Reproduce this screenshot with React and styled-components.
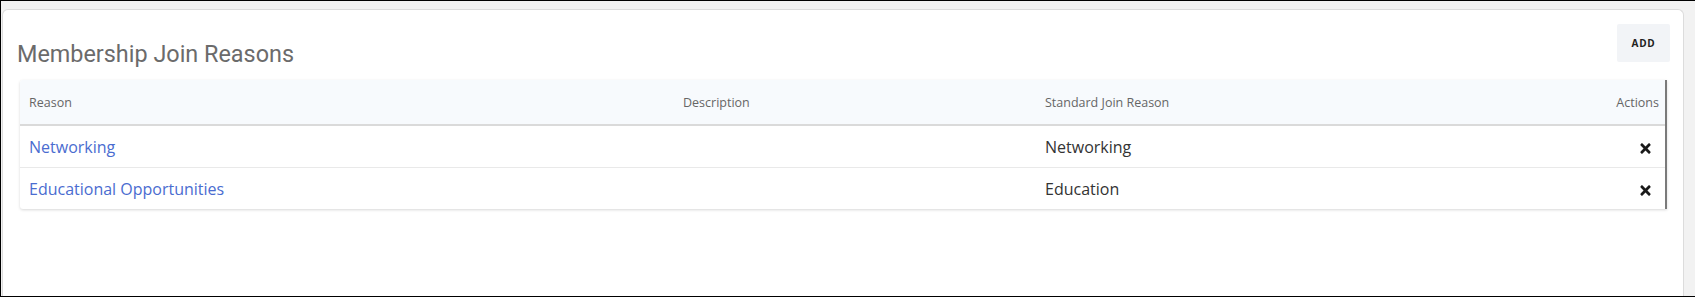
import React from 'react';
import styled, { createGlobalStyle } from 'styled-components';
import { FaTimes } from 'react-icons/fa';

const GlobalStyle = createGlobalStyle`
    html, body {
        margin: 0;
        padding: 0;
        background: #f2f2f2;
    }
`;

const Frame = styled.div`
    box-sizing: border-box;
    width: 1695px;
    height: 297px;
    border-top: 1px solid #000;
    border-left: 1px solid #000;
    border-bottom: 1px solid #000;
    background: #f2f2f2;
    padding: 8px 11px 0 1px;
    display: flex;
    flex-direction: column;
`;

const Card = styled.div`
    flex: 1;
    background: #fff;
    border: 1px solid #dcdcdc;
    border-bottom: none;
    border-radius: 6px 6px 0 0;
`;

const Header = styled.div`
    display: flex;
    justify-content: space-between;
    align-items: flex-start;
    padding: 14px 13px 0 14px;
`;

const Title = styled.h2`
    margin: 17px 0 0;
    font-family: Roboto, "Liberation Sans", sans-serif;
    font-weight: 400;
    font-size: 23.4px;
    line-height: 27px;
    color: #6b6b6b;
`;

const AddButton = styled.button`
    width: 53px;
    height: 38px;
    border: none;
    border-radius: 2px;
    background: #f2f4f7;
    font-family: "Open Sans", "Liberation Sans", sans-serif;
    font-weight: 700;
    font-size: 10px;
    letter-spacing: 0.8px;
    color: #222;
    cursor: pointer;
`;

const TableWrap = styled.div`
    margin: 12px 16px 0 17px;
    border-right: 2px solid #7a7a7a;
    box-shadow: 0 1px 3px rgba(0, 0, 0, 0.16);
    border-radius: 3px 0 0 3px;
    overflow: hidden;
`;

const Table = styled.table`
    width: 100%;
    border-collapse: collapse;
    table-layout: fixed;
    font-family: "Open Sans", "Liberation Sans", sans-serif;
`;

const Th = styled.th`
    height: 44px;
    padding: ${({ $align }) => ($align === 'right' ? '0 6px 0 9px' : '0 9px')};
    background: #f7fafd;
    border-bottom: 2px solid #dadada;
    font-size: 12.5px;
    font-weight: 400;
    color: #666;
    text-align: ${({ $align }) => $align || 'left'};
`;

const Row = styled.tr`
    & + & td {
        border-top: 1px solid #e9e9e9;
    }
`;

const Td = styled.td`
    height: 41px;
    padding: ${({ $align }) => ($align === 'right' ? '0 6px 0 9px' : '0 9px')};
    font-size: 16px;
    line-height: 22px;
    color: #333;
    text-align: ${({ $align }) => $align || 'left'};
`;

const ReasonLink = styled.a`
    color: #4a6cd0;
    text-decoration: none;
    cursor: pointer;
`;

const DeleteIcon = styled(FaTimes)`
    display: inline-block;
    vertical-align: middle;
    margin-right: 6px;
    color: #1a1a1a;
`;

const reasons = [
    { reason: 'Networking', description: '', standard: 'Networking' },
    { reason: 'Educational Opportunities', description: '', standard: 'Education' },
];

const App = () => {
    return (
        <>
            <GlobalStyle />
            <Frame>
                <Card>
                    <Header>
                        <Title>Membership Join Reasons</Title>
                        <AddButton>ADD</AddButton>
                    </Header>
                    <TableWrap>
                        <Table>
                            <colgroup>
                                <col style={{ width: 654 }} />
                                <col style={{ width: 362 }} />
                                <col />
                                <col style={{ width: 120 }} />
                            </colgroup>
                            <thead>
                                <tr>
                                    <Th>Reason</Th>
                                    <Th>Description</Th>
                                    <Th>Standard Join Reason</Th>
                                    <Th $align="right">Actions</Th>
                                </tr>
                            </thead>
                            <tbody>
                                {reasons.map((r, index) => (
                                    <Row key={index}>
                                        <Td><ReasonLink>{r.reason}</ReasonLink></Td>
                                        <Td>{r.description}</Td>
                                        <Td>{r.standard}</Td>
                                        <Td $align="right"><DeleteIcon size={15} /></Td>
                                    </Row>
                                ))}
                            </tbody>
                        </Table>
                    </TableWrap>
                </Card>
            </Frame>
        </>
    );
};

export default App;
